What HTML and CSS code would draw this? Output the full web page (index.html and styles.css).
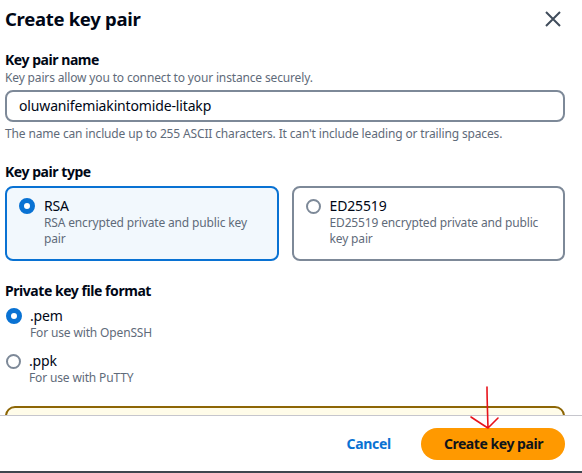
FILE: index.html
```html
<!DOCTYPE html>
<html lang="en">
<head>
<meta charset="utf-8">
<title>Create key pair</title>
<link rel="stylesheet" href="styles.css">
</head>
<body>
<div class="modal">
  <div class="header">
    <h1 class="title">Create key pair</h1>
    <svg class="close" width="16" height="16" viewBox="0 0 16 16" aria-label="Close"><path d="M1 1 L15 15 M15 1 L1 15" stroke="#414d5c" stroke-width="2" fill="none"/></svg>
  </div>
  <div class="body">
    <div class="label label-first">Key pair name</div>
    <div class="desc">Key pairs allow you to connect to your instance securely.</div>
    <div class="input">oluwanifemiakintomide-litakp</div>
    <div class="desc helper">The name can include up to 255 ASCII characters. It can't include leading or trailing spaces.</div>

    <div class="label label-section">Key pair type</div>
    <div class="cards">
      <div class="card card-selected">
        <span class="radio radio-on"></span>
        <div class="card-text">
          <div class="opt">RSA</div>
          <div class="desc">RSA encrypted private and public key<br>pair</div>
        </div>
      </div>
      <div class="card">
        <span class="radio"></span>
        <div class="card-text">
          <div class="opt">ED25519</div>
          <div class="desc">ED25519 encrypted private and public<br>key pair</div>
        </div>
      </div>
    </div>

    <div class="label label-section">Private key file format</div>
    <div class="radios">
      <div class="ropt">
        <span class="radio radio-on"></span>
        <div>
          <div class="opt">.pem</div>
          <div class="desc">For use with OpenSSH</div>
        </div>
      </div>
      <div class="ropt">
        <span class="radio"></span>
        <div>
          <div class="opt">.ppk</div>
          <div class="desc">For use with PuTTY</div>
        </div>
      </div>
    </div>
    <div class="alert"></div>
  </div>
  <div class="footer">
    <span class="cancel">Cancel</span>
    <span class="primary">Create key pair</span>
  </div>
</div>
<svg class="annot" width="40" height="50" viewBox="0 0 40 50"><path d="M22 2 C22 12 22.5 25 23 43 M6 32 C12 36 18 40 23 43 C27 39 30 36 33 33" stroke="#e8131b" stroke-width="1.6" fill="none" stroke-linecap="round"/></svg>
</body>
</html>
```

FILE: styles.css
```css
html, body {
  margin: 0;
  padding: 0;
  background: #ffffff;
}
body {
  font-family: "Noto Sans", "Open Sans", Arial, sans-serif;
  color: #000716;
  width: 582px;
  height: 473px;
  overflow: hidden;
  position: relative;
  letter-spacing: -0.15px;
}
.modal {
  display: flex;
  flex-direction: column;
  height: 473px;
}
.header {
  display: flex;
  justify-content: space-between;
  align-items: flex-start;
  padding: 7px 21px 0 5px;
}
.title {
  margin: 0;
  font-size: 18.5px;
  line-height: 24px;
  font-weight: 700;
  letter-spacing: -0.3px;
}
.close {
  margin-top: 4px;
}
.body {
  flex: 1;
  overflow: hidden;
  padding: 0 17px 0 5px;
}
.label {
  font-size: 14px;
  line-height: 20px;
  font-weight: 700;
  letter-spacing: -0.45px;
}
.label-first { margin-top: 19px; }
.label-section { margin-top: 20px; }
.desc {
  font-size: 12px;
  line-height: 16px;
  color: #5f6b7a;
}
.input {
  margin-top: 4px;
  height: 27px;
  border: 2px solid #7d8998;
  border-radius: 8px;
  padding: 1px 12px 0 12px;
  font-size: 14px;
  line-height: 26px;
  color: #000716;
}
.helper { margin-top: 4px; }
.cards {
  margin-top: 4px;
  display: grid;
  grid-template-columns: 1fr 1fr;
  gap: 13px;
}
.card {
  display: flex;
  gap: 9px;
  border: 2px solid #7d8998;
  border-radius: 8px;
  padding: 9px 10px 12px 12px;
  white-space: nowrap;
}
.card-selected {
  border-color: #0972d3;
  background: #f2f8fd;
}
.opt {
  font-size: 14px;
  line-height: 18px;
}
.radio {
  flex: none;
  box-sizing: border-box;
  width: 15px;
  height: 15px;
  border-radius: 50%;
  border: 2px solid #7d8998;
  background: #fff;
  margin-top: 2px;
}
.radio-on {
  width: 16px;
  height: 16px;
  border: 5px solid #0972d3;
  margin-top: 1px;
}
.radios {
  margin-top: 6px;
  display: flex;
  flex-direction: column;
  gap: 11px;
}
.ropt {
  display: flex;
  gap: 8px;
  padding-left: 1px;
}
.alert {
  margin-top: 20px;
  height: 40px;
  border: 2px solid #8d6605;
  border-radius: 10px;
  background: #fffce9;
}
.footer {
  flex: none;
  box-sizing: border-box;
  height: 58px;
  border-top: 1px solid #c6c6cd;
  border-bottom: 2px solid #3f464f;
  display: flex;
  justify-content: flex-end;
  align-items: center;
  padding-right: 17px;
}
.cancel {
  font-size: 14px;
  font-weight: 700;
  color: #0972d3;
  margin-right: 30px;
  letter-spacing: -0.3px;
}
.primary {
  background: #ff9900;
  color: #0f141a;
  font-size: 14px;
  font-weight: 700;
  height: 32px;
  line-height: 32px;
  border-radius: 16px;
  padding: 0 22px 0 23px;
  letter-spacing: -0.45px;
}
.annot {
  position: absolute;
  left: 465px;
  top: 385px;
}
```
